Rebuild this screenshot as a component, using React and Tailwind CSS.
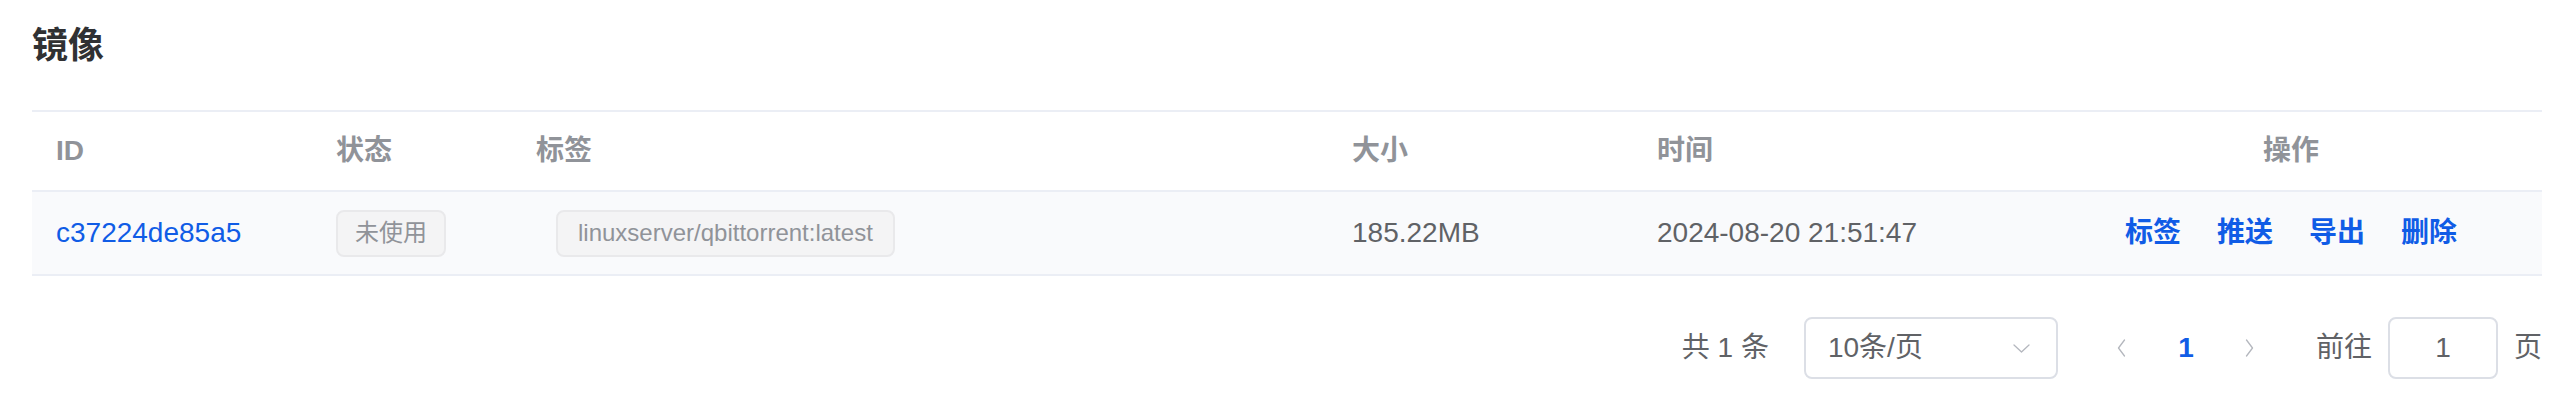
import React from "react";

const font = { fontFamily: '"Liberation Sans", "Noto Sans CJK SC", sans-serif' };

const rows = [
  {
    id: "c37224de85a5",
    status: "未使用",
    tag: "linuxserver/qbittorrent:latest",
    size: "185.22MB",
    time: "2024-08-20 21:51:47",
  },
];

const actions = ["标签", "推送", "导出", "删除"];

function Chevron({ dir }) {
  const d = {
    left: "M7 1 L1 9 L7 17",
    right: "M1 1 L7 9 L1 17",
  }[dir];
  return (
    <svg width="9" height="18" viewBox="0 0 8 18" fill="none">
      <path d={d} stroke="#b4b7be" strokeWidth="1.3" strokeLinecap="round" strokeLinejoin="round" />
    </svg>
  );
}

function Tag({ children, className = "" }) {
  return (
    <span
      className={`inline-flex h-[47px] items-center rounded-[8px] border-2 border-[#e9e9eb] bg-[#f4f4f5] text-[24px] text-[#909399] ${className}`}
    >
      {children}
    </span>
  );
}

export default function App() {
  return (
    <div className="min-h-[412px] bg-white pl-[32px] pr-[24px] pt-[26px]" style={font}>
      <h1 className="text-[36px] font-bold leading-[40px] text-[#303133]">镜像</h1>

      <div className="mt-[44px] border-t-2 border-[#ebeef5]">
        <div className="grid h-[80px] grid-cols-[280px_200px_816px_305px_407px_1fr] items-center border-b-2 border-[#ebeef5] text-[28px] font-bold text-[#909399]">
          <div className="pl-[24px]">ID</div>
          <div className="pl-[24px]">状态</div>
          <div className="pl-[24px]">标签</div>
          <div className="pl-[24px]">大小</div>
          <div className="pl-[24px]">时间</div>
          <div className="text-center">操作</div>
        </div>

        {rows.map((r) => (
          <div
            key={r.id}
            className="grid h-[84px] grid-cols-[280px_200px_816px_305px_407px_1fr] items-center border-b-2 border-[#ebeef5] bg-[#f9fafc] text-[28px] text-[#606266]"
          >
            <div className="pl-[24px] text-[#105ce6]">{r.id}</div>
            <div className="pl-[24px]">
              <Tag className="px-[17px]">{r.status}</Tag>
            </div>
            <div className="pl-[24px]">
              <Tag className="ml-[20px] px-[20px]">{r.tag}</Tag>
            </div>
            <div className="pl-[24px]">{r.size}</div>
            <div className="pl-[24px]">{r.time}</div>
            <div className="flex justify-center gap-[36px] font-bold text-[#105ce6]">
              {actions.map((a) => (
                <span key={a}>{a}</span>
              ))}
            </div>
          </div>
        ))}
      </div>

      <div className="mt-[41px] flex items-center justify-end text-[28px] text-[#606266]">
        <span>共 1 条</span>
        <div className="ml-[35px] flex h-[62px] w-[254px] items-center justify-between rounded-[8px] border-2 border-[#dcdfe6] pl-[22px] pr-[26px]">
          <span>10条/页</span>
          <svg width="17" height="9" viewBox="0 0 17 9" fill="none">
            <path d="M1 1 L8.5 8 L16 1" stroke="#b4b7be" strokeWidth="1.3" strokeLinecap="round" strokeLinejoin="round" />
          </svg>
        </div>
        <div className="ml-[32px] flex h-[62px] w-[64px] items-center justify-center">
          <Chevron dir="left" />
        </div>
        <div className="flex h-[62px] w-[64px] items-center justify-center font-bold text-[#105ce6]">1</div>
        <div className="flex h-[62px] w-[64px] items-center justify-center">
          <Chevron dir="right" />
        </div>
        <span className="ml-[34px]">前往</span>
        <div className="ml-[16px] flex h-[62px] w-[110px] items-center justify-center rounded-[8px] border-2 border-[#dcdfe6]">
          1
        </div>
        <span className="ml-[16px]">页</span>
      </div>
    </div>
  );
}
